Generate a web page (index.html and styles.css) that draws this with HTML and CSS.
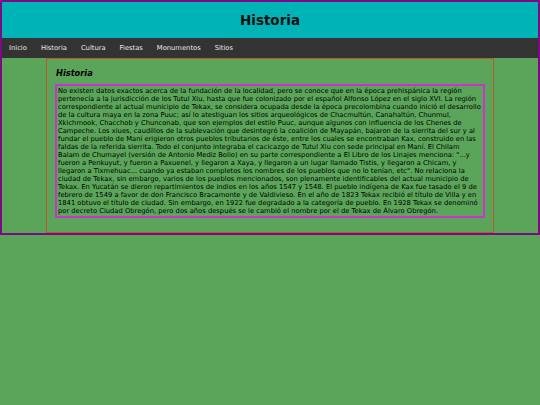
FILE: index.html
```html
<!DOCTYPE html>
<html lang="es">
<head>
<meta charset="utf-8">
<title>Historia</title>
<link rel="stylesheet" href="styles.css">
</head>
<body>
<div class="page">
  <header class="header"><h1 class="title">Historia</h1></header>
  <nav class="nav">
    <a href="#">Inicio</a>
    <a href="#">Historia</a>
    <a href="#">Cultura</a>
    <a href="#">Fiestas</a>
    <a href="#">Monumentos</a>
    <a href="#">Sitios</a>
  </nav>
  <main class="main">
    <section class="section">
      <h2 class="sec-title">Historia</h2>
      <p class="text">No existen datos exactos acerca de la fundación de la localidad, pero se conoce que en la época prehispánica la región pertenecía a la jurisdicción de los Tutul Xiu, hasta que fue colonizado por el español Alfonso López en el siglo XVI. La región correspondiente al actual municipio de Tekax, se considera ocupada desde la época precolombina cuando inició el desarrollo de la cultura maya en la zona Puuc; así lo atestiguan los sitios arqueológicos de Chacmultún, Canahaltún, Chunmul, Xkichmook, Chacchob y Chunconab, que son ejemplos del estilo Puuc, aunque algunos con influencia de los Chenes de Campeche. Los xiues, caudillos de la sublevación que desintegró la coalición de Mayapán, bajaron de la sierrita del sur y al fundar el pueblo de Maní erigieron otros pueblos tributarios de éste, entre los cuales se encontraban Kax, construido en las faldas de la referida sierrita. Todo el conjunto integraba el cacicazgo de Tutul Xiu con sede principal en Maní. El Chilam Balam de Chumayel (versión de Antonio Mediz Bolio) en su parte correspondiente a El Libro de los Linajes menciona: "...y fueron a Penkuyut, y fueron a Paxuenel, y llegaron a Xaya, y llegaron a un lugar llamado Tistis, y llegaron a Chicam, y llegaron a Tixmehuac... cuando ya estaban completos los nombres de los pueblos que no lo tenían, etc". No relaciona la ciudad de Tekax, sin embargo, varios de los pueblos mencionados, son plenamente identificables del actual municipio de Tekax. En Yucatán se dieron repartimientos de indios en los años 1547 y 1548. El pueblo indígena de Kax fue tasado el 9 de febrero de 1549 a favor de don Francisco Bracamonte y de Valdivieso. En el año de 1823 Tekax recibió el título de Villa y en 1841 obtuvo el título de ciudad. Sin embargo, en 1922 fue degradado a la categoría de pueblo. En 1928 Tekax se denominó por decreto Ciudad Obregón, pero dos años después se le cambió el nombre por el de Tekax de Álvaro Obregón.</p>
    </section>
  </main>
</div>
</body>
</html>
```
FILE: styles.css
```css
html, body {
  margin: 0;
  padding: 0;
}
body {
  background: #5ba55a;
  font-family: "DejaVu Sans", Verdana, sans-serif;
  color: #000;
}
.page {
  border: 2px solid #7d0a82;
}
.header {
  background: #00b3b6;
  height: 36px;
  display: flex;
  align-items: center;
  justify-content: center;
}
.title {
  margin: 0;
  font-size: 13.5px;
  font-weight: bold;
  color: #111;
}
.nav {
  background: #333333;
  height: 20px;
  display: flex;
  align-items: center;
}
.nav a {
  color: #e6e6e6;
  text-decoration: none;
  font-size: 6.75px;
  padding: 0 7px;
}
.section {
  box-sizing: border-box;
  width: 448px;
  margin: 0 auto;
  border: 1px solid #b85a2a;
  padding: 9px 8px 14px 8px;
}
.sec-title {
  margin: 0 0 6px 1px;
  font-size: 8.25px;
  font-style: italic;
  font-weight: bold;
}
.text {
  margin: 0;
  border: 2px solid #cc33cc;
  padding: 1px;
  font-size: 6.75px;
  line-height: 8px;
}
```
